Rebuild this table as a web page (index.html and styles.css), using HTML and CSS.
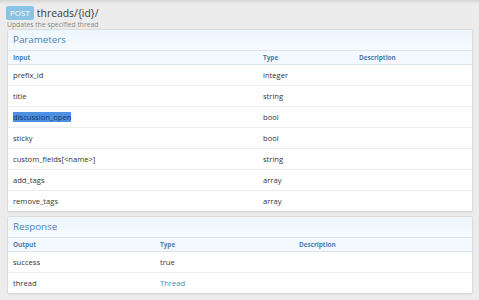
FILE: index.html
```html
<!DOCTYPE html>
<html>
<head>
<meta charset="utf-8">
<link rel="stylesheet" href="styles.css">
</head>
<body>
<div class="topshade"></div>
<div class="page">
  <div class="title-row">
    <span class="badge">POST</span>
    <span class="route">threads/{id}/</span>
  </div>
  <div class="subtitle">Updates the specified thread</div>

  <div class="block">
    <div class="block-head">Parameters</div>
    <div class="table params">
      <div class="row head"><span>Input</span><span>Type</span><span>Description</span></div>
      <div class="row"><span>prefix_id</span><span>integer</span><span></span></div>
      <div class="row"><span>title</span><span>string</span><span></span></div>
      <div class="row"><span><span class="sel">discussion_open</span></span><span>bool</span><span></span></div>
      <div class="row"><span>sticky</span><span>bool</span><span></span></div>
      <div class="row"><span>custom_fields[&lt;name&gt;]</span><span>string</span><span></span></div>
      <div class="row"><span>add_tags</span><span>array</span><span></span></div>
      <div class="row last"><span>remove_tags</span><span>array</span><span></span></div>
    </div>
  </div>

  <div class="block resp">
    <div class="block-head">Response</div>
    <div class="table response">
      <div class="row head"><span>Output</span><span>Type</span><span>Description</span></div>
      <div class="row"><span>success</span><span>true</span><span></span></div>
      <div class="row last"><span>thread</span><span class="link">Thread</span><span></span></div>
    </div>
  </div>
</div>
</body>
</html>
```
FILE: styles.css
```css
html, body {
  margin: 0;
  padding: 0;
}
body {
  background: #ececec;
  font-family: "Open Sans", "Noto Sans", sans-serif;
  color: #2a2a2a;
  width: 479px;
  height: 300px;
  overflow: hidden;
  position: relative;
}
.topshade {
  position: absolute;
  left: 0;
  top: 0;
  right: 0;
  height: 4px;
  background: linear-gradient(#d4d4d4, #ececec);
}
.page {
  padding: 5px 6px 0 7px;
}
.title-row {
  display: flex;
  align-items: center;
  height: 15px;
  gap: 3px;
  margin-left: -1px;
}
.badge {
  background: #8cc3e4;
  color: #fff;
  font-size: 8px;
  line-height: 14px;
  height: 14px;
  padding: 0 4px;
  border-radius: 2px;
}
.route {
  font-size: 10.4px;
  color: #3b3b3b;
}
.subtitle {
  font-size: 6.8px;
  color: #8a8a8a;
  line-height: 9px;
}
.block {
  background: #fff;
  border: 1px solid #dcdcdc;
  border-radius: 2px;
  box-shadow: 0 1px 1px rgba(0,0,0,0.06);
}
.block.resp {
  margin-top: 4px;
}
.block-head {
  height: 20px;
  line-height: 20px;
  padding: 0 5px;
  font-size: 9.8px;
  color: #4a84b4;
  background: linear-gradient(#edf6fd, #f5faff);
  border-bottom: 1px solid #dbe6ef;
}
.row {
  display: grid;
  align-items: center;
  height: 20px;
  padding: 0 5px;
  font-size: 7.6px;
  border-bottom: 1px solid #ececec;
  color: #333;
}
.row.last {
  border-bottom: none;
}
.row.head {
  height: 13px;
  font-size: 6.4px;
  font-weight: 700;
  color: #4a7fae;
  background: #f3f9fe;
  border-bottom: 1px solid #dce5ec;
}
.params .row {
  grid-template-columns: 250px 96px 1fr;
}
.response .row {
  grid-template-columns: 147px 139px 1fr;
}
.sel {
  background: #4d8fe0;
  color: #1b3767;
}
.link {
  color: #4a88bd;
}
```
